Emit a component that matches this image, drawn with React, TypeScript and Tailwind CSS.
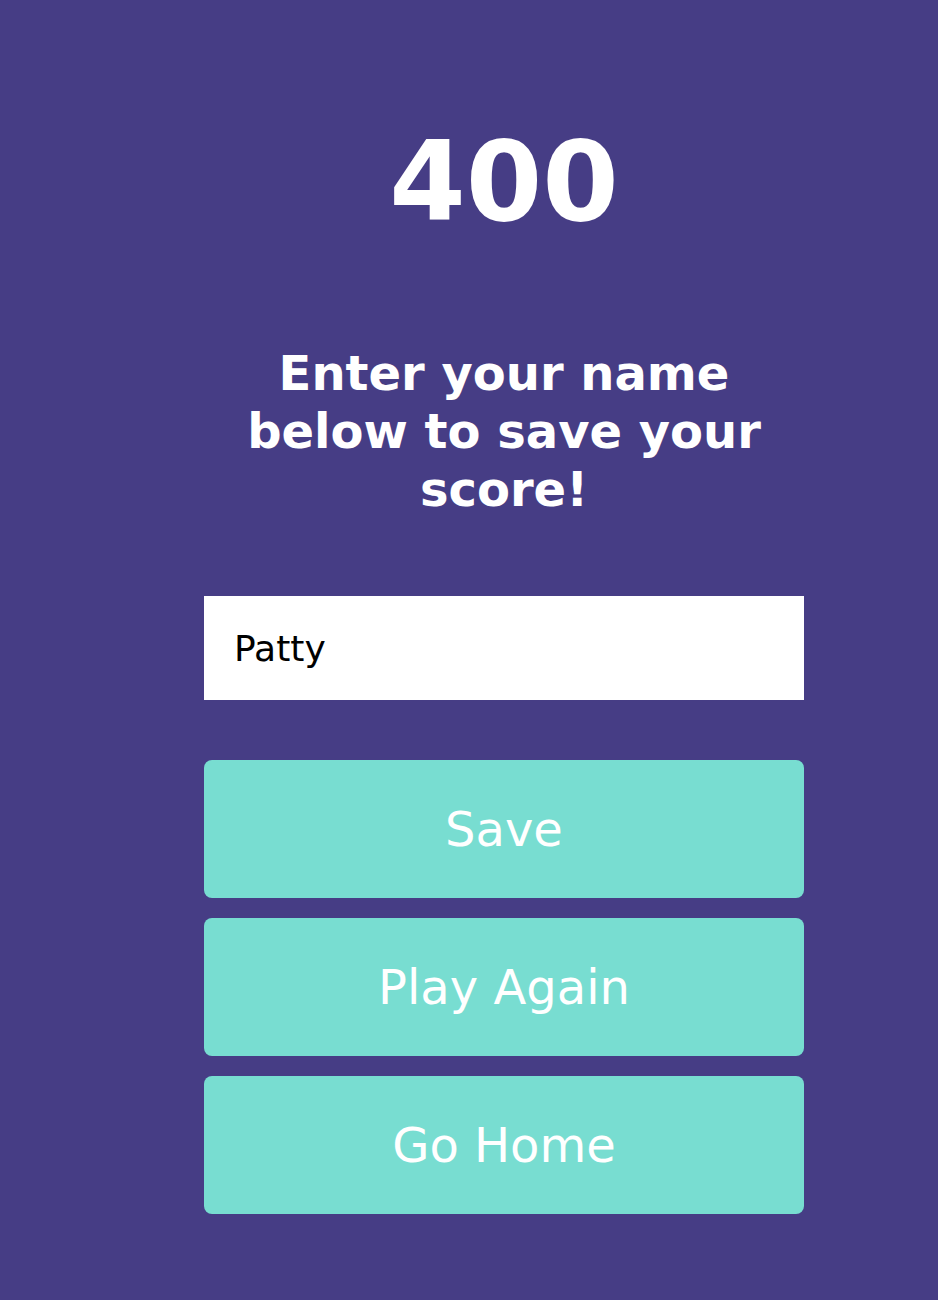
import React, { useState } from 'react';

export default function App() {
  const [name, setName] = useState('Patty');

  return (
    <div className="min-h-screen w-full bg-[#463d85] font-['DejaVu_Sans',Verdana,sans-serif]">
      <div className="ml-[204px] flex w-[600px] flex-col items-center pt-[127px]">
        <h1 className="text-[110px] leading-none font-bold text-white">400</h1>

        <h2 className="mt-[107px] text-center text-[48px] leading-[58px] font-bold text-white">
          Enter your name below to save your score!
        </h2>

        <input
          type="text"
          value={name}
          onChange={(e) => setName(e.target.value)}
          className="mt-[78px] h-[104px] w-full bg-white px-[30px] text-[36px] text-black outline-none"
        />

        <div className="mt-[60px] flex w-full flex-col gap-5">
          <button className="h-[138px] w-full rounded-lg bg-[#78ddd1] text-[48px] text-white">Save</button>
          <button className="h-[138px] w-full rounded-lg bg-[#78ddd1] text-[48px] text-white">Play Again</button>
          <button className="h-[138px] w-full rounded-lg bg-[#78ddd1] text-[48px] text-white">Go Home</button>
        </div>
      </div>
    </div>
  );
}
